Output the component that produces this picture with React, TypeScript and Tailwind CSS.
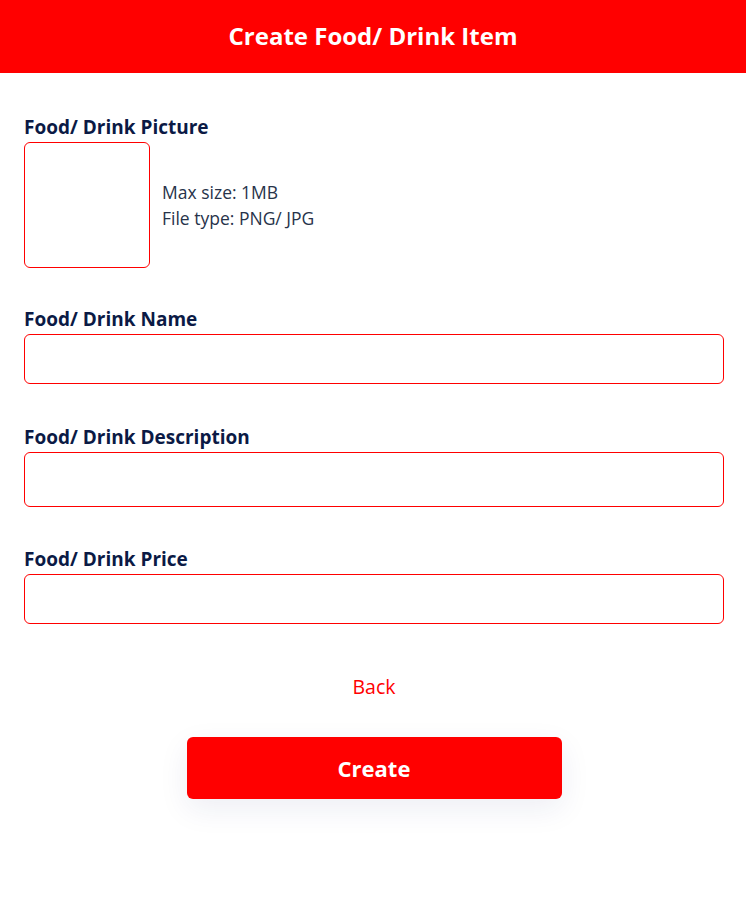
import React from "react";

function Field({ label, h, mt }: { label: string; h: string; mt: string }) {
  return (
    <div className={`${mt} flex flex-col`}>
      <label className="text-[19px] leading-[24px] font-bold text-[#0b1a45]">{label}</label>
      <input className={`mt-[3px] w-full ${h} rounded-[6px] border border-[#ff0000] bg-white px-3 outline-none`} />
    </div>
  );
}

export default function App() {
  return (
    <div className="min-h-[897px] w-full bg-white" style={{ fontFamily: '"Open Sans", "Noto Sans", sans-serif' }}>
      <header className="flex h-[73px] items-center justify-center bg-[#ff0000]">
        <h1 className="-mt-[2px] text-[24px] font-bold text-white">Create Food/ Drink Item</h1>
      </header>
      <main className="pl-[24px] pr-[22px]">
        <div className="mt-[42px] flex flex-col">
          <label className="text-[19px] leading-[24px] font-bold text-[#0b1a45]">Food/ Drink Picture</label>
          <div className="mt-[3px] flex items-center">
            <div className="h-[126px] w-[126px] rounded-[6px] border border-[#ff0000]" />
            <div className="ml-[12px] text-[17.5px] leading-[26px] text-[#27334a]">
              <div>Max size: 1MB</div>
              <div>File type: PNG/ JPG</div>
            </div>
          </div>
        </div>
        <Field label="Food/ Drink Name" h="h-[50px]" mt="mt-[39px]" />
        <Field label="Food/ Drink Description" h="h-[55px]" mt="mt-[41px]" />
        <Field label="Food/ Drink Price" h="h-[50px]" mt="mt-[40px]" />
        <div className="mt-[51px] flex justify-center">
          <button className="text-[19.5px] leading-[24px] text-[#ff0000]">Back</button>
        </div>
        <div className="mt-[38px] flex justify-center">
          <button className="h-[62px] w-[375px] rounded-[6px] bg-[#ff0000] text-[22px] font-bold text-white shadow-[0_10px_30px_rgba(30,40,120,0.08)]">
            Create
          </button>
        </div>
      </main>
    </div>
  );
}
